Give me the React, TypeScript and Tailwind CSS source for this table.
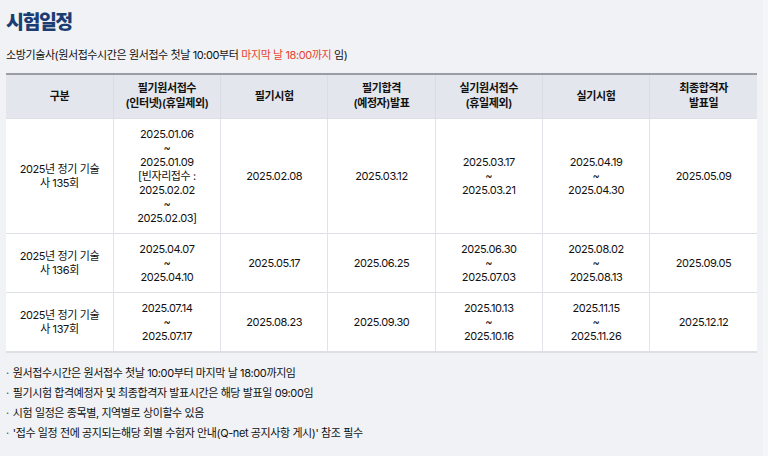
const FONT = '"Inter", "Noto Sans CJK KR", sans-serif'

const HEADERS = [
  ['구분'],
  ['필기원서접수', '(인터넷)(휴일제외)'],
  ['필기시험'],
  ['필기합격', '(예정자)발표'],
  ['실기원서접수', '(휴일제외)'],
  ['실기시험'],
  ['최종합격자', '발표일'],
]

const ROWS: string[][][] = [
  [
    ['2025년 정기 기술사 135회'],
    ['2025.01.06', '~', '2025.01.09', '[빈자리접수 :', '2025.02.02', '~', '2025.02.03]'],
    ['2025.02.08'],
    ['2025.03.12'],
    ['2025.03.17', '~', '2025.03.21'],
    ['2025.04.19', '~', '2025.04.30'],
    ['2025.05.09'],
  ],
  [
    ['2025년 정기 기술사 136회'],
    ['2025.04.07', '~', '2025.04.10'],
    ['2025.05.17'],
    ['2025.06.25'],
    ['2025.06.30', '~', '2025.07.03'],
    ['2025.08.02', '~', '2025.08.13'],
    ['2025.09.05'],
  ],
  [
    ['2025년 정기 기술사 137회'],
    ['2025.07.14', '~', '2025.07.17'],
    ['2025.08.23'],
    ['2025.09.30'],
    ['2025.10.13', '~', '2025.10.16'],
    ['2025.11.15', '~', '2025.11.26'],
    ['2025.12.12'],
  ],
]

const NOTES = [
  '원서접수시간은 원서접수 첫날 10:00부터 마지막 날 18:00까지임',
  '필기시험 합격예정자 및 최종합격자 발표시간은 해당 발표일 09:00임',
  '시험 일정은 종목별, 지역별로 상이할수 있음',
  "'접수 일정 전에 공지되는해당 회별 수험자 안내(Q-net 공지사항 게시)' 참조 필수",
]

export default function App() {
  return (
    <div className="min-h-screen bg-[#f5f6f8]" style={{ fontFamily: FONT }}>
      <div className="w-[763px] min-h-screen bg-[#f0f2f5] px-[6px] pt-[7px] tracking-[-0.4px]">
        <h2 className="text-[19.5px] font-extrabold leading-[30px] text-[#1b3d74] tracking-[-1.5px]">시험일정</h2>

        <p className="mt-[10px] text-[11px] leading-[16px] text-[#111]">
          소방기술사(원서접수시간은 원서접수 첫날 10:00부터{' '}
          <span className="text-[#e8432f]">마지막 날 18:00까지</span> 임)
        </p>

        {/* schedule table */}
        <table className="mt-[10px] w-[751px] table-fixed border-collapse border-y-2 border-t-[#9a9da3] border-b-[#dcdfe4] text-center text-[11px] text-[#111]">
          <thead>
            <tr className="bg-[#e3e6ec]">
              {HEADERS.map((h, i) => (
                <th
                  key={i}
                  className="h-[44px] border-x border-[#d9dce2] px-2 font-semibold leading-[15px] first:border-l-0 last:border-r-0"
                >
                  {h.map((line, j) => (
                    <div key={j}>{line}</div>
                  ))}
                </th>
              ))}
            </tr>
          </thead>
          <tbody className="bg-white">
            {ROWS.map((row, r) => (
              <tr key={r} className="border-t border-[#dcdfe4]">
                {row.map((cell, c) => (
                  <td
                    key={c}
                    className="border-x border-[#e1e3e8] px-[11px] py-2 leading-[14px] first:border-l-0 last:border-r-0"
                  >
                    {cell.map((line, j) => (
                      <div key={j}>{line}</div>
                    ))}
                  </td>
                ))}
              </tr>
            ))}
          </tbody>
        </table>

        <ul className="mt-[13px] flex flex-col gap-[6px] text-[11px] leading-[14px] text-[#111]">
          {NOTES.map((n, i) => (
            <li key={i} className="flex gap-[4px]">
              <span className="text-[#555]">·</span>
              <span>{n}</span>
            </li>
          ))}
        </ul>
      </div>
    </div>
  )
}
